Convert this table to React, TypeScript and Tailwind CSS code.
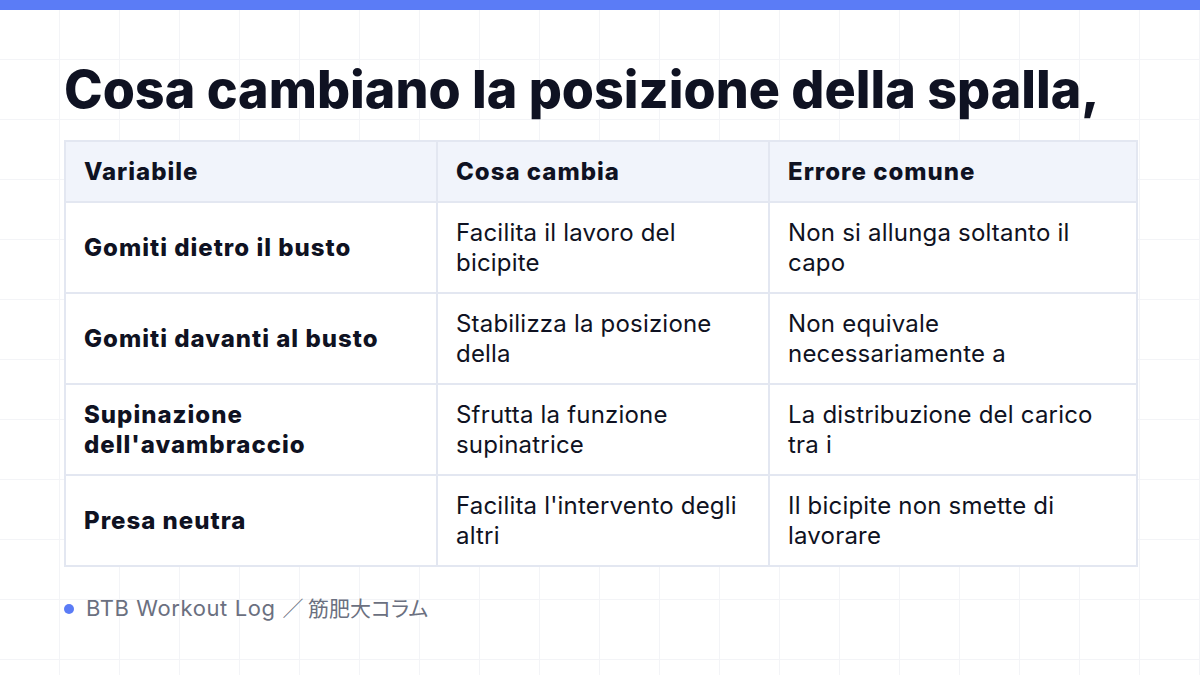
import React from "react";

const rows = [
  ["Gomiti dietro il busto", "Facilita il lavoro del bicipite", "Non si allunga soltanto il capo"],
  ["Gomiti davanti al busto", "Stabilizza la posizione della", "Non equivale necessariamente a"],
  ["Supinazione dell'avambraccio", "Sfrutta la funzione supinatrice", "La distribuzione del carico tra i"],
  ["Presa neutra", "Facilita l'intervento degli altri", "Il bicipite non smette di lavorare"],
];

export default function App() {
  return (
    <div
      className="relative w-[1200px] h-[675px] overflow-hidden bg-white"
      style={{
        fontFamily: "Inter, 'Noto Sans CJK JP', sans-serif",
        backgroundImage:
          "linear-gradient(to right, #f3f4f7 1px, transparent 1px), linear-gradient(to bottom, #f3f4f7 1px, transparent 1px)",
        backgroundSize: "60px 60px",
        backgroundPosition: "-1px -1px",
      }}
    >
      <div className="h-[10px] bg-[#5b7cf6]" />
      <div className="px-[64px] pt-[48px]">
        <h1 className="text-[52px] leading-[64px] font-extrabold text-[#0f1222] whitespace-nowrap">
          Cosa cambiano la posizione della spalla,
        </h1>
        <table className="mt-[18px] w-[1072px] border-collapse border-2 border-[#e3e7f1] table-fixed bg-white">
          <colgroup>
            <col className="w-[372px]" />
            <col className="w-[332px]" />
            <col className="w-[368px]" />
          </colgroup>
          <thead>
            <tr className="h-[61px] bg-[#f1f4fb]">
              {["Variabile", "Cosa cambia", "Errore comune"].map((h) => (
                <th key={h} className="border-2 border-[#e3e7f1] text-left pl-[18px] text-[24px] tracking-[1px] font-extrabold text-[#0f1222]">
                  {h}
                </th>
              ))}
            </tr>
          </thead>
          <tbody>
            {rows.map((r) => (
              <tr key={r[0]} className="h-[91px]">
                <td className="border-2 border-[#e3e7f1] pl-[18px] pr-[18px] align-middle text-[24px] tracking-[1px] leading-[30px] font-extrabold text-[#0f1222]">
                  {r[0]}
                </td>
                <td className="border-2 border-[#e3e7f1] pl-[18px] pr-[18px] align-middle text-[24px] tracking-[0.2px] leading-[30px] text-[#0f1222]">
                  {r[1]}
                </td>
                <td className="border-2 border-[#e3e7f1] pl-[18px] pr-[18px] align-middle text-[24px] tracking-[0.2px] leading-[30px] text-[#0f1222]">
                  {r[2]}
                </td>
              </tr>
            ))}
          </tbody>
        </table>
        <div className="mt-[25px] flex items-center gap-[12px]">
          <span className="w-[10px] h-[10px] rounded-full bg-[#5b7cf6]" />
          <span className="text-[22px] text-[#6b7080] whitespace-nowrap">
            <span className="tracking-[0.6px]">BTB Workout Log </span>
            <span className="text-[21px] [font-feature-settings:'palt']" style={{ fontFamily: "'Noto Sans CJK JP', sans-serif" }}>
              ／ 筋肥大コラム
            </span>
          </span>
        </div>
      </div>
    </div>
  );
}
